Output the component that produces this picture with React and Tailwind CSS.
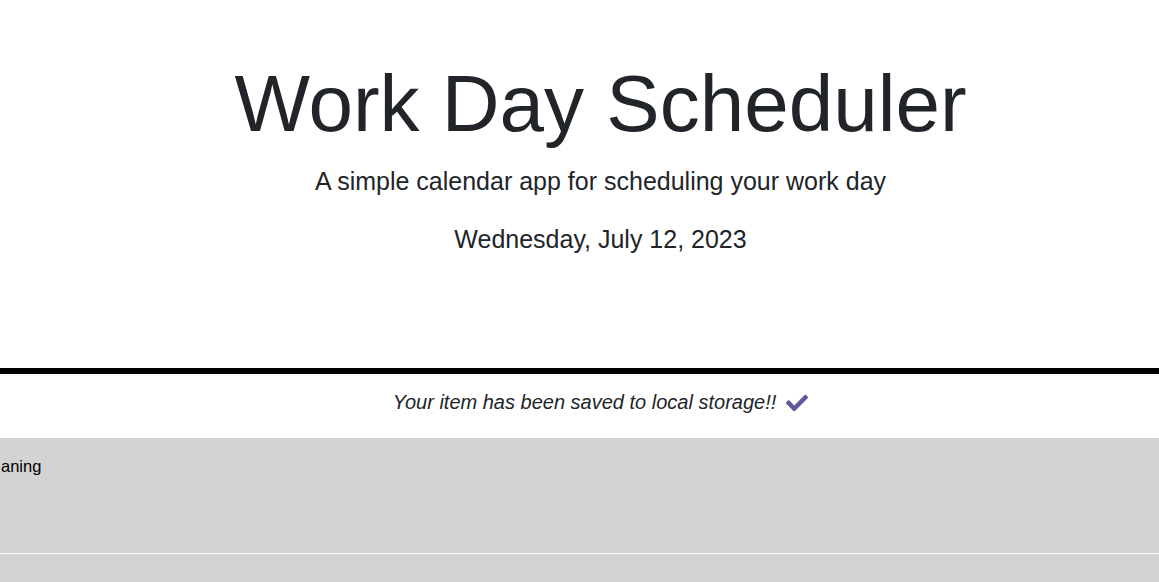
export default function App() {
  const font = { fontFamily: '"Liberation Sans", Arial, sans-serif' };

  return (
    <div className="min-h-screen bg-white text-[#212529] overflow-hidden" style={font}>
      {/* Header */}
      <header className="text-center pl-[42px] pt-[56px] pb-[111px] border-b-[6px] border-black">
        <h1 className="text-[80px] leading-[96px] font-light">Work Day Scheduler</h1>
        <p className="mt-[11px] text-[25px] leading-[36px]">A simple calendar app for scheduling your work day</p>
        <p className="mt-[22px] text-[25px] leading-[36px]">Wednesday, July 12, 2023</p>
      </header>

      {/* Saved notice */}
      <div className="h-[64px] flex justify-center items-start pl-[42px] pt-[13px]">
        <p className="italic text-[20px] leading-[30px]">Your item has been saved to local storage!!</p>
        <svg viewBox="0 0 512 512" className="w-[22px] h-[22px] ml-[10px] mt-[5px] fill-[#63569a]">
          <path d="M173.898 439.404l-166.4-166.4c-9.997-9.997-9.997-26.206 0-36.204l36.203-36.204c9.997-9.998 26.207-9.998 36.204 0L192 312.69 432.095 72.596c9.997-9.997 26.207-9.997 36.204 0l36.203 36.204c9.997 9.997 9.997 26.206 0 36.204l-294.4 294.401c-9.998 9.997-26.207 9.997-36.204-.001z" />
        </svg>
      </div>

      {/* Time blocks */}
      <div>
        <div className="h-[116px] bg-[#d3d3d3] border-b border-white pt-[16px] pl-[1px]">
          <p className="text-[16.5px] leading-[24px] text-black">aning</p>
        </div>
        <div className="h-[116px] bg-[#d3d3d3] border-b border-white" />
      </div>
    </div>
  );
}
